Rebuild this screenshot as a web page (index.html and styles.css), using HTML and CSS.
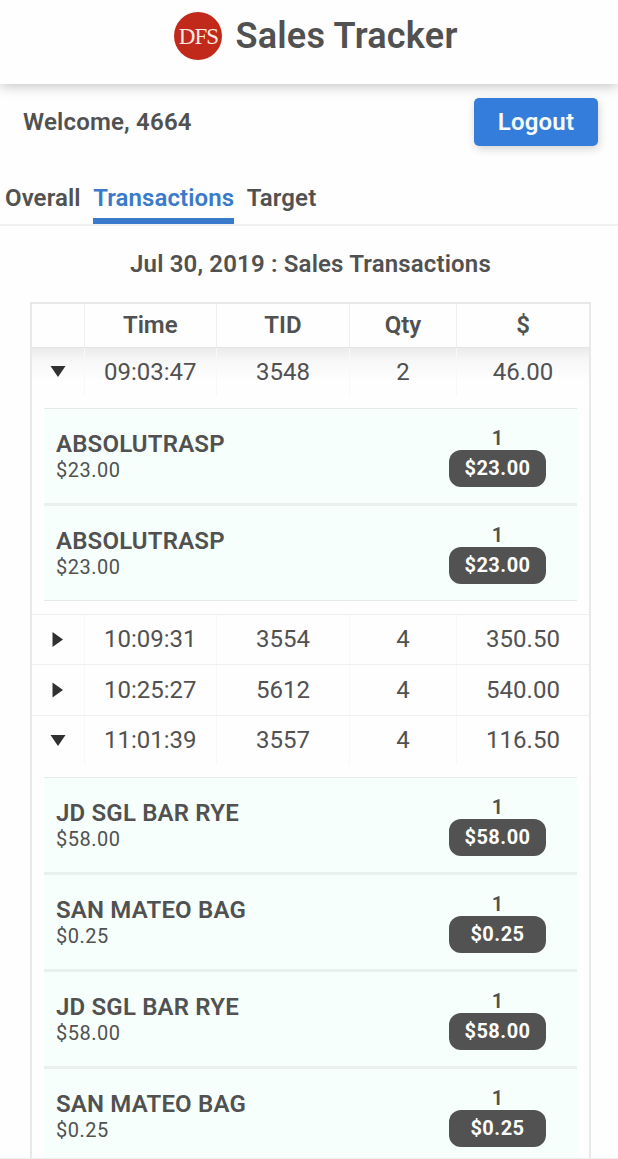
FILE: index.html
```
<!DOCTYPE html>
<html lang="en">
<head>
<meta charset="utf-8">
<title>Sales Tracker</title>
<link rel="stylesheet" href="styles.css">
</head>
<body>
<header class="header">
  <div class="logo">DFS</div>
  <h1 class="title">Sales Tracker</h1>
</header>
<section class="welcome">
  <span class="user">Welcome, 4664</span>
  <button class="logout">Logout</button>
</section>
<nav class="tabs">
  <a class="tab">Overall</a>
  <a class="tab active">Transactions</a>
  <a class="tab">Target</a>
</nav>
<h2 class="subtitle">Jul 30, 2019 : Sales Transactions</h2>
<main class="table">
  <div class="row head"><span></span><span>Time</span><span>TID</span><span>Qty</span><span>$</span></div>
  <div class="row first"><span><svg class="arrow" viewBox="0 0 16 16"><path d="M.5 3h15L8 14z"/></svg></span><span>09:03:47</span><span>3548</span><span>2</span><span>46.00</span></div>
  <div class="panel">
    <div class="item"><div><div class="name">ABSOLUTRASP</div><div class="price">$23.00</div></div><div class="amount"><b class="count">1</b><b class="badge">$23.00</b></div></div>
    <div class="item"><div><div class="name">ABSOLUTRASP</div><div class="price">$23.00</div></div><div class="amount"><b class="count">1</b><b class="badge">$23.00</b></div></div>
  </div>
  <div class="row"><span><svg class="arrow" viewBox="0 0 16 16"><path d="M2.500 0v15l10.500-7.500z"/></svg></span><span>10:09:31</span><span>3554</span><span>4</span><span>350.50</span></div>
  <div class="row tall"><span><svg class="arrow" viewBox="0 0 16 16"><path d="M2.500.500v15l10.500-7.500z"/></svg></span><span>10:25:27</span><span>5612</span><span>4</span><span>540.00</span></div>
  <div class="row"><span><svg class="arrow" viewBox="0 0 16 16"><path d="M.5 2h15L8 13z"/></svg></span><span>11:01:39</span><span>3557</span><span>4</span><span>116.50</span></div>
  <div class="panel">
    <div class="item"><div><div class="name">JD SGL BAR RYE</div><div class="price">$58.00</div></div><div class="amount"><b class="count">1</b><b class="badge">$58.00</b></div></div>
    <div class="item"><div><div class="name">SAN MATEO BAG</div><div class="price">$0.25</div></div><div class="amount"><b class="count">1</b><b class="badge">$0.25</b></div></div>
    <div class="item"><div><div class="name">JD SGL BAR RYE</div><div class="price">$58.00</div></div><div class="amount"><b class="count">1</b><b class="badge">$58.00</b></div></div>
    <div class="item"><div><div class="name">SAN MATEO BAG</div><div class="price">$0.25</div></div><div class="amount"><b class="count">1</b><b class="badge">$0.25</b></div></div>
  </div>
</main>
</body>
</html>
```
FILE: styles.css
```
* { box-sizing: border-box; }
html { height: 1159px; overflow: hidden; }
body {
  margin: 0;
  height: 1159px;
  overflow: hidden;
  background: #fefefe;
  border-bottom: 1px solid #f0f0f0;
  color: #515151;
  font-family: Roboto, "Liberation Sans", sans-serif;
}
.header {
  display: flex;
  justify-content: center;
  gap: 13px;
  height: 84px;
  padding: 12px 0 0 14px;
  background: #fefefe;
  box-shadow: 0 2px 12px rgba(0, 0, 0, .24);
}
.logo {
  width: 48px;
  height: 48px;
  border-radius: 50%;
  background: #c12a1a;
  color: #fbe9e4;
  font: 23px/49px "Liberation Serif", serif;
  letter-spacing: -1px;
  text-align: center;
}
.title { margin: 0; font-size: 36px; line-height: 48px; font-weight: 600; letter-spacing: .25px; }
.welcome {
  display: flex;
  justify-content: space-between;
  height: 89px;
  padding: 14px 20px 0 23px;
}
.user { font-size: 24px; line-height: 48px; font-weight: 600; letter-spacing: .2px; }
.logout {
  width: 124px;
  height: 48px;
  padding: 0;
  border: 0;
  border-radius: 5px;
  background: #357ddb;
  box-shadow: 1px 3px 9px rgba(0, 0, 0, .17);
  color: #f5fbff;
  font: 600 24px/48px Roboto, sans-serif;
  letter-spacing: .2px;
}
.tabs {
  display: flex;
  gap: 12.5px;
  height: 53px;
  padding-left: 5px;
  border-bottom: 2px solid #f0f0f0;
}
.tab { height: 51px; font-size: 24px; line-height: 50px; font-weight: 600; letter-spacing: .1px; }
.active { color: #3a7aca; border-bottom: 6px solid #3a7aca; }
.subtitle {
  margin: 24px 0 0 3px;
  text-align: center;
  font-size: 24px;
  line-height: 28px;
  font-weight: 600;
  letter-spacing: .16px;
}
.table {
  width: 561px;
  margin: 24px 0 0 30px;
  border: 2px solid #e8e8e8;
}
.row {
  display: grid;
  grid-template-columns: 52.5px 132.5px 133px 107px 1fr;
  height: 50px;
  border-top: 1px solid #efefef;
  font-size: 24px;
  line-height: 49px;
  text-align: center;
}
.row > span { display: flex; align-items: center; justify-content: center; border-right: 1px solid #f8f8f8; }
.row > span:last-child { border-right: 0; }
.row.head {
  height: 43px;
  border: 0;
  font-weight: 600;
  line-height: 43px;
}
.row.head > span { border-color: #efefef; }
.row.first {
  height: 49px;
  border-top-color: #e4e4e4;
  background: linear-gradient(#ebebeb, #f7f7f7 12px, #fefefe 32px);
  line-height: 46px;
}
.row.first > span { padding-bottom: 1px; }
.row.tall { height: 51px; }
.arrow { width: 16px; height: 16px; fill: #303030; }
.row.first .arrow { margin-bottom: 1px; }
.panel {
  margin: 12px 12px 13px;
  border-top: 1px solid #e3eae8;
  border-bottom: 1px solid #e3eae8;
  background: #f6fffc;
}
.item {
  display: flex;
  justify-content: space-between;
  height: 97px;
  padding: 20px 31px 0 12px;
  border-bottom: 3px solid #e9f1ee;
}
.item:last-child { height: 94px; border-bottom: 0; }
.name { padding-top: 1px; font-size: 24px; line-height: 28px; font-weight: 600; letter-spacing: .18px; }
.price { font-size: 20px; line-height: 24px; letter-spacing: .5px; }
.amount { display: flex; flex-direction: column; align-items: center; width: 97px; }
.count { height: 21px; font-size: 20px; line-height: 19px; font-weight: 600; }
.badge {
  width: 97px;
  height: 37px;
  border-radius: 12px;
  background: #525252;
  color: #fefefe;
  font-size: 20px;
  line-height: 36px;
  font-weight: 700;
  letter-spacing: .5px;
  text-align: center;
}
```
